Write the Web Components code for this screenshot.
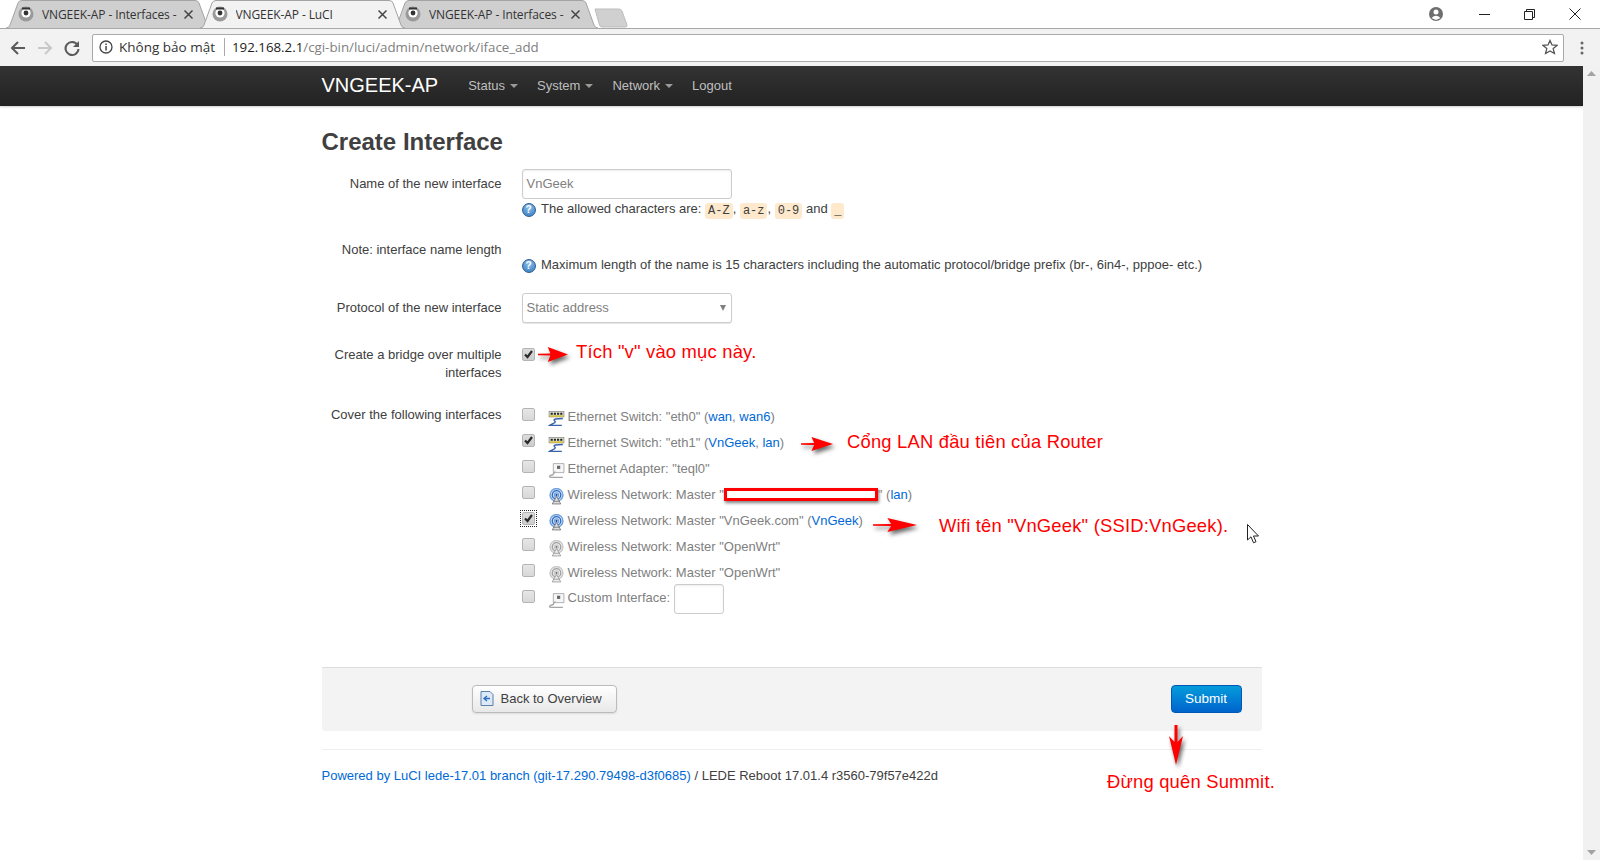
<!DOCTYPE html>
<html lang="vi">
<head>
<meta charset="utf-8">
<title>VNGEEK-AP - LuCI</title>
<style>
  html, body { margin: 0; height: 100%; overflow: hidden; background: #fff; }
  body { display: flex; flex-direction: column; height: 860px; font-family: "Liberation Sans", Arial, sans-serif; }
</style>
</head>
<body>
<tab-strip>
  <browser-tab title-text="VNGEEK-AP - Interfaces -"></browser-tab>
  <browser-tab title-text="VNGEEK-AP - LuCI" active></browser-tab>
  <browser-tab title-text="VNGEEK-AP - Interfaces -"></browser-tab>
</tab-strip>
<browser-toolbar></browser-toolbar>
<page-view>
  <luci-navbar></luci-navbar>
  <page-content>
    <h-title>Create Interface</h-title>
    <form-row label="Name of the new interface" label-pad="6">
      <text-box value="VnGeek"></text-box>
      <help-line>The allowed characters are: <code-chip>A-Z</code-chip>, <code-chip>a-z</code-chip>, <code-chip>0-9</code-chip> and <code-chip>_</code-chip></help-line>
    </form-row>
    <form-row label="Note: interface name length" spacer gap="19">
      <help-line>Maximum length of the name is 15 characters including the automatic protocol/bridge prefix (br-, 6in4-, pppoe- etc.)</help-line>
    </form-row>
    <form-row label="Protocol of the new interface" label-pad="6">
      <select-box value="Static address"></select-box>
    </form-row>
    <form-row label="Create a bridge over multiple interfaces" inset="7" gap="19">
      <check-box checked></check-box>
    </form-row>
    <form-row label="Cover the following interfaces" inset="3">
      <iface-row icon="switch">Ethernet Switch: "eth0" (<a-link>wan</a-link>, <a-link>wan6</a-link>)</iface-row>
      <iface-row icon="switch" checked>Ethernet Switch: "eth1" (<a-link>VnGeek</a-link>, <a-link>lan</a-link>)</iface-row>
      <iface-row icon="adapter">Ethernet Adapter: "teql0"</iface-row>
      <iface-row icon="wifi">Wireless Network: Master "<redact-box></redact-box>" (<a-link>lan</a-link>)</iface-row>
      <iface-row icon="wifi" checked focused>Wireless Network: Master "VnGeek.com" (<a-link>VnGeek</a-link>)</iface-row>
      <iface-row icon="wifi-off">Wireless Network: Master "OpenWrt"</iface-row>
      <iface-row icon="wifi-off">Wireless Network: Master "OpenWrt"</iface-row>
      <iface-row icon="adapter">Custom Interface: <text-box small></text-box></iface-row>
    </form-row>
    <action-bar></action-bar>
    <page-footer></page-footer>
  </page-content>
  <red-arrow x="538" y="347" w="30" h="15"></red-arrow>
  <red-note x="576" y="341">Tích "v" vào mục này.</red-note>
  <red-arrow x="801" y="437" w="32" h="14"></red-arrow>
  <red-note x="847" y="431">Cổng LAN đầu tiên của Router</red-note>
  <red-arrow x="873" y="518" w="44" h="14"></red-arrow>
  <red-note x="939" y="515">Wifi tên "VnGeek" (SSID:VnGeek).</red-note>
  <red-arrow x="1168" y="725" w="16" h="40" down></red-arrow>
  <red-note x="1107" y="771">Đừng quên Summit.</red-note>
  <mouse-cursor></mouse-cursor>
</page-view>

<script>
const UI = '"Open Sans", "Noto Sans", sans-serif';

function makeShadow(el, html) {
  el.attachShadow({ mode: "open" });
  el.shadowRoot.innerHTML = html;
}

// favicon used by every tab
const favicon = `<svg width="16" height="16" viewBox="0 0 16 16">
  <circle cx="8" cy="8" r="7.5" fill="#9a9a9a"/>
  <circle cx="8" cy="7" r="4.6" fill="#fff"/>
  <circle cx="8" cy="7" r="2.4" fill="#333"/>
  <rect x="4" y="1.5" width="8" height="2" fill="#333"/>
</svg>`;

customElements.define("tab-strip", class extends HTMLElement {
  constructor() {
    super();
    makeShadow(this, `<style>
      :host { display: flex; height: 28px; padding-left: 6px; background: #fff; flex: none; position: relative; box-sizing: border-box; }
      .new { width: 34px; height: 20px; margin: 8px 0 0 7px; }
    </style>
    <slot></slot>
    <svg class="new" viewBox="0 0 34 20"><path d="M1 1 H25 Q27 1 28 3 L33 17 Q33.500 19 31 19 H8 Q6 19 5.500 17 Z" fill="#d0d0d0" stroke="#bdbdbd"/></svg>`);
  }
});

customElements.define("browser-tab", class extends HTMLElement {
  constructor() {
    super();
    const active = this.hasAttribute("active");
    makeShadow(this, `<style>
      :host { display: block; width: 205px; height: 28px; margin-right: -11.500px; position: relative; z-index: ${active ? 2 : 1}; }
      svg.bg { position: absolute; inset: 0; }
      .in { position: relative; display: flex; align-items: center; height: 28px; padding-left: 12px; }
      .title { margin-left: 8px; width: 140px; white-space: nowrap; overflow: hidden; font: 12px ${UI}; color: #333; letter-spacing: -0.100px; }
      .x { margin-left: 1px; width: 11px; height: 11px; }
    </style>
    <svg class="bg" width="205" height="28" viewBox="0 0 205 28">
      <path d="M0 28 Q3 28 4 25 L12 3 Q13 0.500 16 0.500 H189 Q192 0.500 193 3 L201 25 Q202 28 205 28" fill="${active ? "#f2f2f2" : "#cfcfcf"}" stroke="#a3a3a3"/>
    </svg>
    <div class="in">
      ${favicon}
      <span class="title">${this.getAttribute("title-text")}</span>
      <svg class="x" viewBox="0 0 11 11"><path d="M1.500 1.500 L9.500 9.500 M9.500 1.500 L1.500 9.500" stroke="#444" stroke-width="1.500"/></svg>
    </div>`);
  }
});

customElements.define("browser-toolbar", class extends HTMLElement {
  constructor() {
    super();
    makeShadow(this, `<style>
      :host { display: flex; align-items: center; height: 38px; flex: none; box-sizing: border-box; background: #f2f2f2; border-top: 1px solid #a8a8a8; position: relative; z-index: 1; }
      svg { flex: none; display: block; }
      .nav { display: flex; gap: 9px; margin-left: 9px; align-items: center; }
      .box { display: flex; align-items: center; box-sizing: border-box; height: 28px; width: 1472px; margin-left: 11px; padding-bottom: 1px; background: #fff; border: 1px solid #a9a9a9; border-radius: 2px; font: 13.300px ${UI}; white-space: nowrap; }
      .safe { margin-left: 6px; color: #333; font-size: 13.500px; }
      .sep { width: 1px; height: 18px; background: #aaa; margin: 0 7px 0 9px; }
      .host { color: #222; } .path { color: #808080; }
      .fill { flex: 1; }
      .dots { margin-left: 16px; }
    </style>
    <div class="nav">
      <svg width="18" height="18" viewBox="0 0 18 18"><path d="M16 9 H3 M9 3 L3 9 L9 15" fill="none" stroke="#5a5a5a" stroke-width="2"/></svg>
      <svg width="18" height="18" viewBox="0 0 18 18"><path d="M2 9 H15 M9 3 L15 9 L9 15" fill="none" stroke="#c8c8c8" stroke-width="2"/></svg>
      <svg width="18" height="18" viewBox="0 0 18 18"><path d="M14.500 6 A6.500 6.500 0 1 0 15.500 10" fill="none" stroke="#5a5a5a" stroke-width="2"/><path d="M16 2 V8 H10 Z" fill="#5a5a5a"/></svg>
    </div>
    <div class="box">
      <svg style="margin-left:6px" width="14" height="14" viewBox="0 0 14 14"><circle cx="7" cy="7" r="6" fill="none" stroke="#444" stroke-width="1.300"/><rect x="6.300" y="6" width="1.500" height="4.500" fill="#444"/><rect x="6.300" y="3.500" width="1.500" height="1.500" fill="#444"/></svg>
      <span class="safe">Không bảo mật</span>
      <span class="sep"></span>
      <span class="host">192.168.2.1</span><span class="path">/cgi-bin/luci/admin/network/iface_add</span>
      <span class="fill"></span>
      <svg style="margin-right:5px" width="16" height="16" viewBox="0 0 16 16"><path d="M8 1.500 L10 6 L15 6.400 L11.200 9.600 L12.400 14.500 L8 11.900 L3.600 14.500 L4.800 9.600 L1 6.400 L6 6 Z" fill="none" stroke="#555" stroke-width="1.300"/></svg>
    </div>
    <svg class="dots" width="4" height="14" viewBox="0 0 4 14"><circle cx="2" cy="2" r="1.500" fill="#666"/><circle cx="2" cy="7" r="1.500" fill="#666"/><circle cx="2" cy="12" r="1.500" fill="#666"/></svg>`);
  }
});

// window controls and account icon, they sit over the tab strip
customElements.define("window-controls", class extends HTMLElement {
  constructor() {
    super();
    makeShadow(this, `<style>
      :host { position: absolute; top: 0; right: 0; height: 28px; display: flex; align-items: center; }
      svg { display: block; }
    </style>
    <svg style="margin-right:36px" width="14" height="14" viewBox="0 0 14 14"><circle cx="7" cy="7" r="7" fill="#6e6e6e"/><circle cx="7" cy="5" r="2.500" fill="#fff"/><path d="M2.500 11 Q7 6.500 11.500 11 L7 13 Z" fill="#fff"/></svg>
    <svg style="margin-right:34px" width="11" height="11" viewBox="0 0 11 11"><path d="M0 5.500 H11" stroke="#222"/></svg>
    <svg style="margin-right:34px" width="11" height="11" viewBox="0 0 11 11"><path d="M0.500 2.500 H8.500 V10.500 H0.500 Z M2.500 2.500 V0.500 H10.500 V8.500 H8.500" fill="none" stroke="#222"/></svg>
    <svg style="margin-right:19px" width="12" height="12" viewBox="0 0 12 12"><path d="M0.500 0.500 L11.500 11.500 M11.500 0.500 L0.500 11.500" stroke="#222"/></svg>`);
  }
});
document.querySelector("tab-strip").append(document.createElement("window-controls"));

customElements.define("page-view", class extends HTMLElement {
  constructor() {
    super();
    makeShadow(this, `<style>
      :host { display: flex; flex: 1; min-height: 0; position: relative; }
      .main { flex: 1; min-width: 0; display: flex; flex-direction: column; }
      .bar { width: 17px; flex: none; background: #f1f1f1; display: flex; flex-direction: column; justify-content: space-between; align-items: center; padding: 5px 0; box-sizing: border-box; }
    </style>
    <div class="main"><slot></slot></div>
    <div class="bar">
      <svg width="9" height="5" viewBox="0 0 9 5"><path d="M4.500 0 L9 5 H0 Z" fill="#a3a3a3"/></svg>
      <svg width="9" height="5" viewBox="0 0 9 5"><path d="M0 0 H9 L4.500 5 Z" fill="#a3a3a3"/></svg>
    </div>`);
  }
});

customElements.define("luci-navbar", class extends HTMLElement {
  constructor() {
    super();
    const items = ["Status", "System", "Network"].map(t => `<span class="item">${t}<i></i></span>`).join("");
    makeShadow(this, `<style>
      :host { display: block; flex: none; height: 40px; background: linear-gradient(#333, #222); box-shadow: 0 1px 2px rgba(0,0,0,.2); }
      .wrap { width: 940px; margin: 0 auto; display: flex; align-items: center; box-sizing: border-box; height: 40px; padding-bottom: 2px; font-family: "Liberation Sans", Arial, sans-serif; }
      .brand { font-size: 20px; color: #fff; margin-right: 30px; }
      .item { font-size: 13px; color: #bfbfbf; margin-right: 19px; display: flex; align-items: center; }
      i { margin-left: 5px; margin-top: 1px; border: 4px solid transparent; border-top-color: #9a9a9a; border-bottom: 0; }
    </style>
    <div class="wrap"><span class="brand">VNGEEK-AP</span>${items}<span class="item">Logout</span></div>`);
  }
});

customElements.define("page-content", class extends HTMLElement {
  constructor() {
    super();
    makeShadow(this, `<style>
      :host { display: block; width: 940px; margin: 0 auto; padding-top: 18px; font: 13px/18px "Liberation Sans", Arial, sans-serif; color: #404040; }
    </style><slot></slot>`);
  }
});

customElements.define("h-title", class extends HTMLElement {
  constructor() {
    super();
    makeShadow(this, `<style>
      :host { display: block; font-size: 24px; font-weight: bold; line-height: 36px; margin-bottom: 9px; color: #404040; }
    </style><slot></slot>`);
  }
});

customElements.define("form-row", class extends HTMLElement {
  constructor() {
    super();
    const spacer = this.hasAttribute("spacer") ? `<div class="sp"></div>` : "";
    const inset = this.getAttribute("inset") || 0;
    const labelPad = this.getAttribute("label-pad") || 5;
    const gap = this.getAttribute("gap") || 18;
    makeShadow(this, `<style>
      :host { display: grid; grid-template-columns: 180px 1fr; column-gap: 20px; margin-bottom: ${gap}px; }
      .label { padding-top: ${labelPad}px; text-align: right; }
      .field { padding-top: ${inset}px; min-width: 0; }
      .sp { height: 19px; }
    </style>
    <div class="label">${this.getAttribute("label")}</div>
    <div class="field">${spacer}<slot></slot></div>`);
  }
});

customElements.define("text-box", class extends HTMLElement {
  constructor() {
    super();
    const small = this.hasAttribute("small");
    makeShadow(this, `<style>
      :host { display: ${small ? "inline-block" : "block"}; vertical-align: middle; box-sizing: border-box; width: ${small ? 50 : 210}px; height: 30px; padding: 0 4px; border: 1px solid #ccc; border-radius: 3px; background: #fff; box-shadow: inset 0 1px 2px rgba(0,0,0,.08); color: #808080; line-height: 28px; font-size: 13px; }
    </style>${this.getAttribute("value") || ""}`);
  }
});

customElements.define("select-box", class extends HTMLElement {
  constructor() {
    super();
    makeShadow(this, `<style>
      :host { display: flex; align-items: center; justify-content: space-between; box-sizing: border-box; width: 210px; height: 30px; padding: 0 5px 0 4px; border: 1px solid #ccc; border-radius: 3px; background: #fff; box-shadow: 0 1px 1px rgba(0,0,0,.1); color: #808080; font-size: 13px; }
      i { border: 3.500px solid transparent; border-top: 6px solid #808080; border-bottom: 0; }
    </style>${this.getAttribute("value")}<i></i>`);
  }
});

customElements.define("help-line", class extends HTMLElement {
  constructor() {
    super();
    makeShadow(this, `<style>
      :host { display: flex; align-items: center; height: 18px; margin-top: 1px; white-space: pre; }
      .q { flex: none; box-sizing: border-box; width: 14px; height: 14px; margin: 1px 5.500px 0 0; border-radius: 50%; border: 1px solid #2f5f8f; background: radial-gradient(circle at 50% 30%, #8fc0ec, #2f78bd); color: #fff; font: bold 10px/12px "Liberation Sans", sans-serif; text-align: center; }
      .t { display: block; }
    </style><span class="q">?</span><span class="t"><slot></slot></span>`);
  }
});

customElements.define("code-chip", class extends HTMLElement {
  constructor() {
    super();
    makeShadow(this, `<style>
      :host { display: inline-block; padding: 0 3px; background: #fee9cc; border-radius: 3px; font: 12px/16px "Liberation Mono", monospace; color: #404040; vertical-align: -1px; }
    </style><slot></slot>`);
  }
});

customElements.define("check-box", class extends HTMLElement {
  constructor() {
    super();
    const checked = this.hasAttribute("checked");
    const check = checked
      ? `<svg width="11" height="11" viewBox="0 0 11 11"><path d="M2 5.500 L4.500 8 L9 2" fill="none" stroke="#2a2a2a" stroke-width="2.200"/></svg>` : "";
    const focus = this.hasAttribute("focused")
      ? `:host::after { content: ""; position: absolute; inset: -3px; border: 1px dotted #222; }` : "";
    makeShadow(this, `<style>
      :host { display: flex; position: relative; align-items: center; justify-content: center; box-sizing: border-box; width: 13px; height: 13px; border: 1px solid #b4b4b4; border-radius: 2px; background: linear-gradient(${checked ? "#dcdcdc, #cdcdcd" : "#e6e6e6, #d8d8d8"}); }
      ${focus}
    </style>${check}`);
  }
});

// small device icons from the LuCI theme
const icons = {
  switch: `<rect x="1" y="1.500" width="14" height="5" fill="#e2e2d4" stroke="#777" stroke-width=".6"/>
    <path d="M2.500 2.500 h2 v2 h-2 z M5.500 2.500 h2 v2 h-2 z M8.500 2.500 h2 v2 h-2 z M11.500 2.500 h2 v2 h-2 z" fill="#222"/>
    <path d="M1.500 5 H14.500 V6.500 H1.500 Z" fill="#d4c23a"/>
    <path d="M14 8 C8 8 4 8.500 6.500 10.500 C8 12 4 12.500 1.500 14.500 L13 14.500" fill="none" stroke="#3a62a8" stroke-width="1.300"/>`,
  adapter: `<path d="M5 1.500 H15 V10 H5 Z" fill="#f6f6f6" stroke="#a5a5a5" stroke-width=".8"/>
    <rect x="8.500" y="3.500" width="3" height="3" fill="#666"/>
    <path d="M7 9 C4 10 7 12 3 12.500 C1 13 1 14.500 3 14.500 H14" fill="none" stroke="#a5a5a5" stroke-width="1.300"/>`,
  wifi: `<circle cx="8" cy="6.500" r="6.800" fill="#cfe0f5"/>
    <circle cx="8" cy="6.500" r="6" fill="none" stroke="#6f9fdc" stroke-width="1.200"/>
    <circle cx="8" cy="6.500" r="4" fill="none" stroke="#2d6cc4" stroke-width="1.200"/>
    <circle cx="8" cy="6.500" r="2" fill="none" stroke="#6f9fdc" stroke-width="1"/>
    <circle cx="8" cy="6.500" r="1" fill="#1e4f9e"/>
    <path d="M8 8 L4 15 H12 Z" fill="#ddd" stroke="#777" stroke-width=".8"/><path d="M5 12.500 H11" stroke="#777" stroke-width=".8"/>`,
  "wifi-off": `<circle cx="8" cy="6.500" r="6.800" fill="#ececec"/>
    <circle cx="8" cy="6.500" r="6" fill="none" stroke="#c8c8c8" stroke-width="1.200"/>
    <circle cx="8" cy="6.500" r="4" fill="none" stroke="#a0a0a0" stroke-width="1.200"/>
    <circle cx="8" cy="6.500" r="2" fill="none" stroke="#c8c8c8" stroke-width="1"/>
    <circle cx="8" cy="6.500" r="1" fill="#777"/>
    <path d="M8 8 L4 15 H12 Z" fill="#eee" stroke="#999" stroke-width=".8"/><path d="M5 12.500 H11" stroke="#999" stroke-width=".8"/>`
};

customElements.define("iface-row", class extends HTMLElement {
  constructor() {
    super();
    const attrs = (this.hasAttribute("checked") ? " checked" : "") + (this.hasAttribute("focused") ? " focused" : "");
    makeShadow(this, `<style>
      :host { display: flex; align-items: center; height: 26px; color: #808080; white-space: pre; }
      check-box { margin: -6px 13px 0 0; flex: none; }
      svg { flex: none; margin: 3px 3px 0 0; }
      .t { display: block; }
    </style>
    <check-box${attrs}></check-box>
    <svg width="17" height="17" viewBox="0 0 16 16">${icons[this.getAttribute("icon")]}</svg>
    <span class="t"><slot></slot></span>`);
  }
});

customElements.define("a-link", class extends HTMLElement {
  constructor() {
    super();
    makeShadow(this, `<style>:host { color: #0069d6; }</style><slot></slot>`);
  }
});

customElements.define("redact-box", class extends HTMLElement {
  constructor() {
    super();
    makeShadow(this, `<style>
      :host { display: inline-block; box-sizing: border-box; width: 154px; height: 13px; vertical-align: -2px; background: #fff; border: 3px solid #f00; box-shadow: 1px 2px 3px rgba(0,0,0,.5); }
    </style>`);
  }
});

customElements.define("action-bar", class extends HTMLElement {
  constructor() {
    super();
    makeShadow(this, `<style>
      :host { display: flex; align-items: center; justify-content: space-between; box-sizing: border-box; height: 64px; margin-top: 55px; padding: 0 20px 2px 150px; background: #f3f3f3; border-top: 1px solid #ddd; border-radius: 0 0 3px 3px; }
      .btn { display: flex; align-items: center; box-sizing: border-box; height: 28px; border-radius: 4px; font-size: 13px; }
      .back { width: 145px; padding-left: 7px; gap: 7px; color: #404040; background: linear-gradient(#fff, #e8e8e8); border: 1px solid #bbb; box-shadow: 0 1px 2px rgba(0,0,0,.1); }
      .go { width: 71px; justify-content: center; font-size: 13.500px; color: #fff; background: linear-gradient(#049cdb, #0064cd); border: 1px solid #0058b4; }
    </style>
    <span class="btn back">
      <svg width="14" height="15" viewBox="0 0 14 15"><path d="M1 .500 H10 L13 3.500 V14.500 H1 Z" fill="#dbe9f8" stroke="#5d7fa8"/><path d="M10 7.500 H5 M7 5 L4 7.500 L7 10" fill="none" stroke="#2f6fc0" stroke-width="1.400"/></svg>
      Back to Overview
    </span>
    <span class="btn go">Submit</span>`);
  }
});

customElements.define("page-footer", class extends HTMLElement {
  constructor() {
    super();
    makeShadow(this, `<style>
      :host { display: block; margin-top: 18px; padding-top: 17px; border-top: 1px solid #eee; color: #404040; }
      span { color: #0069d6; }
    </style><span>Powered by LuCI lede-17.01 branch (git-17.290.79498-d3f0685)</span> / LEDE Reboot 17.01.4 r3560-79f57e422d`);
  }
});

// annotations drawn over the screenshot, placed by page coordinates
customElements.define("red-note", class extends HTMLElement {
  constructor() {
    super();
    makeShadow(this, `<style>
      :host { position: absolute; left: ${this.getAttribute("x")}px; top: ${this.getAttribute("y") - 66}px; color: #f00; font-size: 18.400px; line-height: 22px; white-space: nowrap; letter-spacing: .2px; }
    </style><slot></slot>`);
  }
});

customElements.define("red-arrow", class extends HTMLElement {
  constructor() {
    super();
    const w = this.getAttribute("w"), h = this.getAttribute("h");
    const d = this.hasAttribute("down")
      ? "M6.500 0 L9.500 0 L9.500 17 L15 11 L8 40 L1 11 L6.500 17 Z"
      : "M0 6.200 L19 6 L15 0 L46 7 L15 14 L19 8 L0 7.800 Z";
    const box = this.hasAttribute("down") ? "0 0 16 40" : "0 0 46 14";
    makeShadow(this, `<style>
      :host { position: absolute; left: ${this.getAttribute("x")}px; top: ${this.getAttribute("y") - 66}px; width: ${w}px; height: ${h}px; filter: drop-shadow(2px 3px 2px rgba(0,0,0,.6)); }
      svg { display: block; }
    </style><svg width="${w}" height="${h}" viewBox="${box}" preserveAspectRatio="none"><path d="${d}" fill="#f00"/></svg>`);
  }
});

customElements.define("mouse-cursor", class extends HTMLElement {
  constructor() {
    super();
    makeShadow(this, `<style>
      :host { position: absolute; left: 1247px; top: ${524 - 66}px; }
      svg { display: block; }
    </style><svg width="13" height="20" viewBox="0 0 13 20"><path d="M.500 .500 V16 L4 12.800 L6.500 18.800 L9 17.700 L6.500 12 H11.500 Z" fill="#fff" stroke="#222"/></svg>`);
  }
});
</script>
</body>
</html>
